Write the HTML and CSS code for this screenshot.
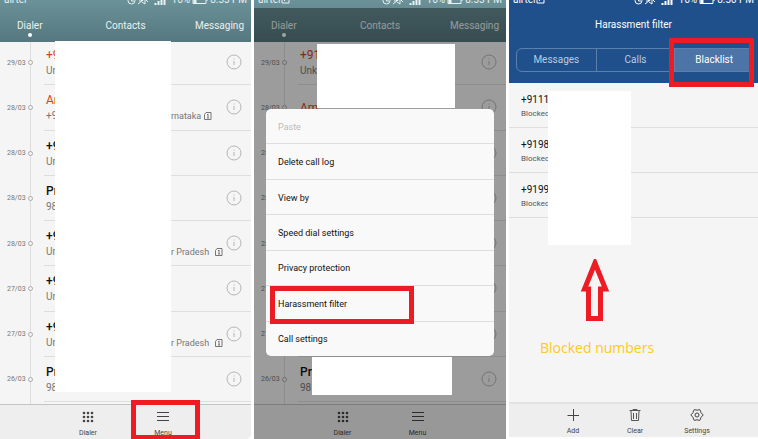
FILE: index.html
```html
<!DOCTYPE html>
<html lang="en">
<head>
<meta charset="utf-8">
<meta name="viewport" content="width=device-width, initial-scale=1">
<title>Harassment filter steps</title>
<link rel="stylesheet" href="styles.css">
<script src="app.js" defer></script>
</head>
<body>
<svg class="defs" aria-hidden="true">
  <symbol id="clock" viewBox="0 0 9 9"><circle cx="4.500" cy="4.500" r="3.500"/><path d="M4.500 2v3H7"/></symbol>
  <symbol id="mute" viewBox="0 0 10 10"><path d="M1 6h2l4-4v7L4 7M0 9 9 2M8 5l2 2"/></symbol>
  <symbol id="signal" viewBox="0 0 12 10"><path d="M1.500 8v2M4.500 6v4M7.500 3v7M10.500 0v10" stroke-width="2"/></symbol>
  <symbol id="battery" viewBox="0 0 16 8"><path d="M1 .5h13v7H1zM15 3v2"/><path d="M2 1h2v6H2z" fill="currentColor"/></symbol>
  <symbol id="note" viewBox="0 0 9 9"><path d="M1 1h7v7H1zM3 6l4-4"/></symbol>
  <symbol id="info" viewBox="0 0 16 16"><circle cx="8" cy="8" r="7"/><path d="M8 7v4M8 4.500v1"/></symbol>
  <symbol id="sim" viewBox="0 0 8 8"><path d="M.5 2.500 2 .5h5v7H.5zM3 3l1-1v4M3 6h2"/></symbol>
  <symbol id="keypad" viewBox="0 0 12 12"><g fill="currentColor" stroke="none"><circle cx="2" cy="2" r="1.300"/><circle cx="6" cy="2" r="1.300"/><circle cx="10" cy="2" r="1.300"/><circle cx="2" cy="6" r="1.300"/><circle cx="6" cy="6" r="1.300"/><circle cx="10" cy="6" r="1.300"/><circle cx="2" cy="10" r="1.300"/><circle cx="6" cy="10" r="1.300"/><circle cx="10" cy="10" r="1.300"/></g></symbol>
  <symbol id="lines" viewBox="0 0 12 12"><path d="M0 1.500h12M0 5.500h12M0 9.500h12"/></symbol>
  <symbol id="plus" viewBox="0 0 12 12"><path d="M6.500 0v12M.5 6.500H12"/></symbol>
  <symbol id="trash" viewBox="0 0 12 12"><path d="M.5 1.500h11M4 1V.5h4V1M2 2l.5 9.500h7L10 2M4.500 4v6M7.500 4v6" stroke-width=".9"/></symbol>
  <symbol id="gear" viewBox="0 0 14 12"><path d="m3.500 2 .8-1.400 2.700.6 2.700-.6L10.500 2l.5 1.700L13.200 6 11 8.300l-.5 1.700-.8 1.400-2.700-.6-2.700.6L3.500 10 3 8.300.8 6 3 3.700z"/><circle cx="7" cy="6" r="2"/></symbol>
</svg>
<main class="steps">
  <section class="phone" aria-label="Call log">
    <header class="head">
      <div class="status"><span class="carrier">airtel</span><svg class="i9"><use href="#clock"/></svg><svg class="i10"><use href="#mute"/></svg><svg class="signal"><use href="#signal"/></svg><span>16%</span><svg class="battery"><use href="#battery"/></svg><span>8:55 PM</span></div>
      <nav class="tabs"><a class="current" href="#dialer">Dialer</a><a href="#contacts">Contacts</a><a href="#messaging">Messaging</a></nav>
    </header>
    <ul class="log" data-log="full"></ul>
    <div class="cover cover-log"></div>
    <footer class="bar">
      <button type="button"><svg class="i12"><use href="#keypad"/></svg>Dialer</button>
      <button type="button" class="marked"><svg class="i12"><use href="#lines"/></svg>Menu</button>
    </footer>
  </section>

  <section class="phone dimmed" aria-label="Call log menu">
    <header class="head">
      <div class="status"><span class="carrier">airtel<svg class="i9"><use href="#note"/></svg></span><svg class="i9"><use href="#clock"/></svg><svg class="i10"><use href="#mute"/></svg><svg class="signal"><use href="#signal"/></svg><span>16%</span><svg class="battery"><use href="#battery"/></svg><span>8:55 PM</span></div>
      <nav class="tabs"><a class="current" href="#dialer">Dialer</a><a href="#contacts">Contacts</a><a href="#messaging">Messaging</a></nav>
    </header>
    <ul class="log" data-log="menu"></ul>
    <footer class="bar">
      <button type="button"><svg class="i12"><use href="#keypad"/></svg>Dialer</button>
      <button type="button"><svg class="i12"><use href="#lines"/></svg>Menu</button>
    </footer>
    <div class="shade"></div>
    <div class="cover cover-top"></div>
    <div class="cover cover-bottom"></div>
    <div class="menu">
      <button type="button" disabled>Paste</button>
      <button type="button">Delete call log</button>
      <button type="button">View by</button>
      <button type="button">Speed dial settings</button>
      <button type="button">Privacy protection</button>
      <button type="button" class="marked">Harassment filter</button>
      <button type="button">Call settings</button>
    </div>
  </section>

  <section class="phone filter" aria-label="Harassment filter">
    <header class="head blue">
      <div class="status"><span class="carrier">airtel<svg class="i9"><use href="#note"/></svg></span><svg class="i9"><use href="#clock"/></svg><svg class="i10"><use href="#mute"/></svg><svg class="signal"><use href="#signal"/></svg><span>16%</span><svg class="battery"><use href="#battery"/></svg><span>8:56 PM</span></div>
      <h1>Harassment filter</h1>
      <div class="segments">
        <button type="button">Messages</button><button type="button">Calls</button><button type="button" class="on marked">Blacklist</button>
      </div>
    </header>
    <ul class="blocked">
      <li><b>+9111</b><span>Blocked</span></li>
      <li><b>+9198</b><span>Blocked</span></li>
      <li><b>+9199</b><span>Blocked</span></li>
    </ul>
    <div class="cover cover-blocked"></div>
    <div class="note">
      <svg class="arrow" viewBox="0 0 30 64"><path d="M15 4 4.500 30H8.500V59.500H20.500V30H25.500Z"/></svg>
      <p>Blocked numbers</p>
    </div>
    <footer class="bar">
      <button type="button"><svg class="i12"><use href="#plus"/></svg>Add</button>
      <button type="button"><svg class="i12"><use href="#trash"/></svg>Clear</button>
      <button type="button"><svg class="gear"><use href="#gear"/></svg>Settings</button>
    </footer>
  </section>
</main>
</body>
</html>
```
FILE: styles.css
```css
*, *::before, *::after { box-sizing: border-box; }

body {
  margin: 0;
  background: #fff;
  color: #111;
  font: 10px/16px Roboto, "Liberation Sans", sans-serif;
}

ul, p, h1 { margin: 0; padding: 0; list-style: none; }
a { color: inherit; text-decoration: none; }

button {
  margin: 0;
  padding: 0;
  border: 0;
  background: none;
  color: inherit;
  font: inherit;
}

svg {
  flex: none;
  fill: none;
  stroke: currentColor;
  stroke-width: 1;
}

.defs { position: absolute; width: 0; height: 0; }
.i9 { width: 9px; height: 9px; }
.i10 { width: 10px; height: 10px; }
.i12 { width: 12px; height: 12px; }
.gear { width: 14px; height: 12px; }
.signal { width: 12px; height: 10px; }
.battery { width: 16px; height: 8px; }

.steps {
  display: grid;
  grid-template-columns: 251fr 252fr 249fr;
  gap: 3px;
  min-height: 100vh;
}

.phone {
  position: relative;
  display: flex;
  flex-direction: column;
  overflow: hidden;
  background: #f5f5f5;
  border-bottom-right-radius: 5px;
}

/* Header */
.head {
  position: relative;
  z-index: 1;
  height: 42px;
  overflow: hidden;
  background: linear-gradient(#6a9298, #56777f);
  color: #e9f1f2;
}

.status {
  display: flex;
  align-items: center;
  gap: 2px;
  height: 10px;
  margin-top: -5px;
  padding: 0 4px;
  line-height: 10px;
}

.status .signal { margin-left: 4px; }
.status .signal + span { margin-left: 4px; }
.carrier { display: flex; margin-right: auto; }

.tabs {
  display: grid;
  grid-template-columns: 1fr auto 1fr;
  padding-top: 13px;
}

.tabs a:first-child { position: relative; justify-self: start; margin-left: 17px; }
.tabs a:last-child { justify-self: end; margin-right: 7px; }

.current::after {
  content: "";
  position: absolute;
  left: 11px;
  top: 15px;
  width: 4px;
  height: 4px;
  border-radius: 50%;
  background: #fff;
}

/* Call log */
.log {
  position: relative;
  flex: 1;
  display: flex;
  flex-direction: column;
  margin-top: -2px;
  padding-bottom: 2px;
}

.log::before {
  content: "";
  position: absolute;
  left: 30px;
  top: 0;
  bottom: 0;
  width: 1px;
  background: #dcdcdc;
}

.log li {
  flex: 1;
  display: grid;
  grid-template-columns: 21px 5px 1fr;
  align-items: center;
  column-gap: 0;
  padding-left: 7px;
}

.log time { color: #777; font-size: 7px; white-space: nowrap; }

.dot {
  position: relative;
  width: 5px;
  height: 5px;
  border: 1px solid #aaa;
  border-radius: 50%;
  background: #f5f5f5;
}

.entry {
  display: flex;
  align-items: center;
  align-self: stretch;
  margin-left: 11px;
  padding: 0 9px 0 2px;
  border-bottom: 1px solid #dedede;
}

.who { flex: 1; padding-top: 2px; white-space: nowrap; }
.who b { display: block; font-size: 12px; font-weight: 500; }
.missed b { color: #d9401c; font-weight: 400; }
.who p { display: flex; align-items: center; color: #777; }
.who p span:first-child { width: 125px; }
.who p .region { font-size: 9px; }
.who .sim { width: 8px; height: 8px; margin-left: 3px; }
.who .far { margin-left: 6px; }
.entry .info { width: 16px; height: 16px; color: #b5b5b5; }

/* Bottom bar */
.bar {
  position: relative;
  display: flex;
  justify-content: center;
  height: 35px;
  border-top: 1px solid #c4c4c4;
  background: #eee;
  color: #444;
}

.bar button {
  position: relative;
  display: flex;
  flex-direction: column;
  align-items: center;
  gap: 6px;
  width: 75px;
  padding-top: 6px;
  font-size: 7px;
  line-height: 8px;
}

/* Blank patches over private details */
.cover { position: absolute; z-index: 2; background: #fff; }
.cover-log { left: 55px; top: 41px; width: 116px; height: 351px; }
.cover-top { left: 63px; top: 44px; width: 138px; height: 64px; }
.cover-bottom { left: 58px; top: 357px; width: 140px; height: 38px; }
.cover-blocked { left: 39px; top: 91px; width: 83px; height: 154px; }

/* Red frames */
.marked { position: relative; }
.marked::after {
  content: "";
  position: absolute;
  z-index: 3;
  border: 5px solid #ed1c24;
}

.bar .marked::after { left: 5px; top: -5px; width: 69px; height: 40px; }
.menu .marked::after { left: 4px; top: 0; width: 144px; height: 38px; }
.segments .marked::after { left: -6px; top: -11px; width: 85px; height: 49px; }

/* Open menu */
.dimmed { border-radius: 0; }

.shade {
  position: absolute;
  z-index: 1;
  inset: 8px 0 0;
  background: rgba(0, 0, 0, .36);
}

.menu {
  position: absolute;
  z-index: 2;
  inset: 109px 12px 83px;
  display: flex;
  flex-direction: column;
  border-radius: 5px;
  background: #f9f9f9;
  font-size: 9px;
}

.menu button {
  flex: 1;
  padding: 1px 0 0 12px;
  border-bottom: 1px solid #dedede;
  text-align: left;
}

.menu button:last-child { border-bottom: 0; }
.menu button:disabled { color: #bbb; }

/* Harassment filter */
.filter { border-radius: 0; border-bottom: 2px solid #fff; }

.blue {
  height: 83px;
  overflow: visible;
  background: #1f508c;
  color: #fff;
}

.blue h1 {
  padding: 12px 0 15px;
  font-size: 10px;
  font-weight: 400;
  text-align: center;
}

.segments {
  display: grid;
  grid-template-columns: repeat(3, 1fr);
  height: 24px;
  margin: 0 4px 0 7px;
  border: 1px solid #5c80ad;
  border-radius: 6px;
  color: #b9cbe0;
}

.segments button + button { border-left: 1px solid #5c80ad; }
.segments .on { border-radius: 0 5px 5px 0; background: #4c74a6; color: #fff; }

.blocked li {
  display: flex;
  flex-direction: column;
  justify-content: center;
  height: 45px;
  padding: 3px 0 0 12px;
  border-bottom: 1px solid #dedede;
}

.blocked b { font-weight: 400; line-height: 14px; }
.blocked span { color: #555; font-size: 8px; line-height: 14px; }

.note {
  flex: 1;
  padding: 41px 0 0 31px;
  color: #ffc91f;
  font: 14px/20px "Open Sans", "Noto Sans", sans-serif;
}

.arrow {
  display: block;
  width: 30px;
  height: 64px;
  margin: 0 0 15px 40px;
  stroke: #ed1c24;
  stroke-width: 5;
}

.filter .bar { padding-left: 3px; border-top: 2px solid #e2e2e2; }
.filter .bar button { width: 62px; padding-top: 5px; }
```
FILE: app.js
```js
// Each call: date, first line, second line, optional region, and a missed flag.
const calls = {
  full: [
    ["29/03", "+9", "Un", "", true],
    ["28/03", "Am", "+9", "rnataka", true],
    ["28/03", "+9", "Un"],
    ["28/03", "Pr", "98"],
    ["28/03", "+9", "Un", "r Pradesh"],
    ["27/03", "+9", "Un"],
    ["27/03", "+9", "Un", "r Pradesh"],
    ["26/03", "Pr", "98"]
  ],
  menu: [
    ["29/03", "+91", "Unk", "", true],
    ["28/03", "Am", "", "", true],
    ["28/03", "", ""],
    ["28/03", "", ""],
    ["28/03", "", ""],
    ["27/03", "", ""],
    ["27/03", "", ""],
    ["26/03", "Pr", "98"]
  ]
};

document.querySelectorAll("[data-log]").forEach((list) => {
  list.innerHTML = calls[list.dataset.log].map(([date, name, detail, region, missed]) => `
    <li class="${missed ? "missed" : ""}">
      <time>${date}</time><span class="dot"></span>
      <div class="entry">
        <div class="who"><b>${name}</b><p><span>${detail}</span>${region ? `<span class="region">${region}</span><svg class="sim ${region === "r Pradesh" ? "far" : ""}"><use href="#sim"/></svg>` : ""}</p></div>
        <svg class="info"><use href="#info"/></svg>
      </div>
    </li>`).join("");
});
```
